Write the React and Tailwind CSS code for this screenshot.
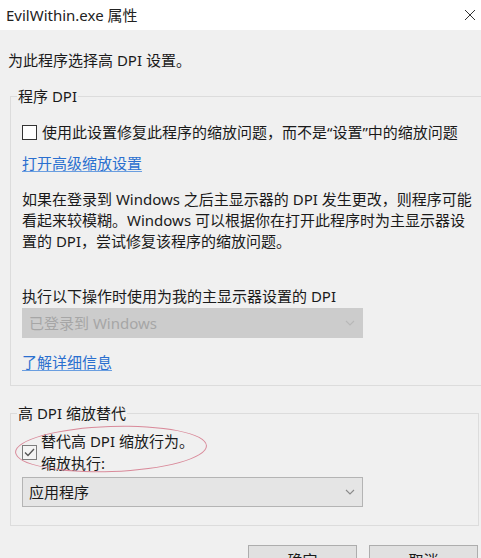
import React from "react";

const FONT = "font-['Noto_Sans','Noto_Sans_CJK_SC',sans-serif]";

function Chevron({ color = "#7a7a7a" }) {
  return (
    <svg width="10" height="6" viewBox="0 0 10 6" fill="none">
      <polyline points="1,1 5,5 9,1" stroke={color} strokeWidth="1.1" />
    </svg>
  );
}

function Select({ value, disabled }) {
  return (
    <div
      className={
        disabled
          ? "w-[341px] h-[30px] flex items-center justify-between pl-[6px] pr-[7px] bg-[#cccccc] border border-[#cccccc] text-[#a6a6a6]"
          : "w-[341px] h-[30px] flex items-center justify-between pl-[6px] pr-[7px] bg-[#e5e5e5] border border-[#b4b4b4] text-[#1a1a1a]"
      }
    >
      <span>{value}</span>
      <Chevron color={disabled ? "#b8b8b8" : "#8a8a8a"} />
    </div>
  );
}

function Checkbox({ checked }) {
  return (
    <div
      className={
        checked
          ? "w-[15px] h-[15px] shrink-0 border border-[#7d7d7d] bg-[#f4f4f4] flex items-center justify-center"
          : "w-[15px] h-[15px] shrink-0 border border-[#333333] bg-white"
      }
    >
      {checked && (
        <svg width="11" height="9" viewBox="0 0 11 9" fill="none">
          <polyline points="1,4.5 4,7.5 10,1" stroke="#555" strokeWidth="1.3" />
        </svg>
      )}
    </div>
  );
}

export default function App() {
  return (
    <div className={`w-[481px] h-[558px] overflow-hidden bg-[#f0f0f0] text-[15px] leading-[21px] text-[#1a1a1a] ${FONT}`}>
      {/* title bar */}
      <div className="h-[30px] bg-white flex items-center justify-between pl-[6px] pr-[5px]">
        <span className="text-[#222]">EvilWithin.exe 属性</span>
        <svg width="12" height="12" viewBox="0 0 12 12" fill="none">
          <path d="M1 1 L11 11 M11 1 L1 11" stroke="#333" strokeWidth="1" />
        </svg>
      </div>

      <div className="pl-[8px] pt-[20px] h-[41px]">为此程序选择高 DPI 设置。</div>

      {/* 程序 DPI */}
      <fieldset className="mt-[15px] ml-[10px] mr-[2px] border border-[#dcdcdc] px-[11px] pb-[12px]">
        <legend className="-ml-[5px] px-[1px] h-[21px]">程序 DPI</legend>
        <div className="mt-[15px] h-[21px] flex items-center gap-[5px]">
          <Checkbox />
          <span className="whitespace-nowrap">使用此设置修复此程序的缩放问题，而不是“设置”中的缩放问题</span>
        </div>
        <div className="mt-[10px] h-[21px]">
          <span className="text-[#2a6fcf] underline underline-offset-2 decoration-[#6a9ee0]">打开高级缩放设置</span>
        </div>
        <div className="mt-[15px] whitespace-nowrap">
          <div>如果在登录到 Windows 之后主显示器的 DPI 发生更改，则程序可能</div>
          <div>看起来较模糊。Windows 可以根据你在打开此程序时为主显示器设</div>
          <div>置的 DPI，尝试修复该程序的缩放问题。</div>
        </div>
        <div className="mt-[34px] h-[21px]">执行以下操作时使用为我的主显示器设置的 DPI</div>
        <div className="mt-[1px]">
          <Select value="已登录到 Windows" disabled />
        </div>
        <div className="mt-[14px] h-[21px]">
          <span className="text-[#2a6fcf] underline underline-offset-2 decoration-[#6a9ee0]">了解详细信息</span>
        </div>
      </fieldset>

      {/* 高 DPI 缩放替代 */}
      <fieldset className="mt-[17px] ml-[10px] mr-[2px] border border-[#dcdcdc] px-[11px] pb-[18px]">
        <legend className="-ml-[5px] px-[1px] h-[21px]">高 DPI 缩放替代</legend>
        <div className="relative mt-[6px] flex items-center gap-[4px] leading-[22px]">
          <Checkbox checked />
          <div>
            <div>替代高 DPI 缩放行为。</div>
            <div>缩放执行:</div>
          </div>
          <div className="absolute left-[-7px] top-[-4px] w-[192px] h-[46px] rounded-[50%] border-[1.5px] border-[#d98a9a] -rotate-2" />
        </div>
        <div className="mt-[3px]">
          <Select value="应用程序" />
        </div>
      </fieldset>

      {/* buttons */}
      <div className="mt-[19px] pl-[248px] flex gap-[12px]">
        <div className="w-[109px] h-[31px] bg-[#e1e1e1] border border-[#adadad] flex items-center justify-center">确定</div>
        <div className="w-[109px] h-[31px] bg-[#e1e1e1] border border-[#adadad] flex items-center justify-center">取消</div>
      </div>
    </div>
  );
}
